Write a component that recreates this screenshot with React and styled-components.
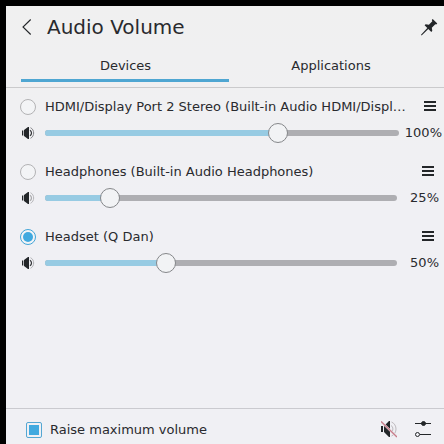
import React from "react";
import styled, { createGlobalStyle } from "styled-components";

const GlobalStyle = createGlobalStyle`
  * { box-sizing: border-box; }
  body { margin: 0; background: #000; overflow: hidden; }
`;

const Screen = styled.div`
  width: 444px;
  height: 444px;
  padding: 6px 0 0 6px;
  background: #000;
  font-family: "DejaVu Sans", sans-serif;
  font-size: 13px;
  color: #292a2e;
`;

const Panel = styled.main`
  display: flex;
  flex-direction: column;
  height: 438px;
  background: linear-gradient(#f0f0f0, #f0f0f4 45%, #f0f0f4);
`;

const Header = styled.header`
  display: flex;
  align-items: center;
  height: 42px;
  padding: 0 6px 0 15px;
`;

const Title = styled.h1`
  flex: 1;
  margin: 0 0 0 14px;
  font-size: 20px;
  line-height: 24px;
  font-weight: 400;
`;

const IconButton = styled.button`
  display: flex;
  flex: none;
  padding: 0;
  border: 0;
  background: none;
  color: #232629;
`;

const Tabs = styled.nav`
  display: flex;
  height: 40px;
  padding: 4px 6px 5px 15px;
  border-bottom: 1px solid #cacacc;
`;

const Tab = styled.button`
  flex: none;
  width: ${(p) => (p.$active ? 208 : 203)}px;
  padding: 0 0 1px 1px;
  border: 0;
  border-bottom: 3px solid ${(p) => (p.$active ? "#4fa6d2" : "transparent")};
  background: none;
  color: inherit;
  font: inherit;
`;

const DeviceList = styled.section`
  flex: 1;
  padding-top: 6px;
`;

const Device = styled.article`
  height: 65px;
  padding-left: 14px;
`;

const Line = styled.div`
  display: flex;
  align-items: center;
  height: 26px;
`;

const Radio = styled.span`
  display: grid;
  place-items: center;
  flex: none;
  width: 16px;
  height: 16px;
  margin-right: 9px;
  border: 1px solid ${(p) => (p.$checked ? "#42a5d8" : "#b3b3b5")};
  border-radius: 50%;
  background: #f3f4f6;

  &::after {
    content: "";
    width: 10px;
    height: 10px;
    border-radius: 50%;
    background: ${(p) => (p.$checked ? "#40a9df" : "transparent")};
  }
`;

const Name = styled.span`
  flex: none;
  width: 361px;
  overflow: hidden;
  white-space: nowrap;
  padding-bottom: 2px;
`;

const MenuButton = styled(IconButton)`
  margin: 0 0 2px ${(p) => (p.$wide ? 18 : 16)}px;
`;

const SpeakerSlot = styled.span`
  display: flex;
  flex: none;
  width: 25px;
`;

const Track = styled.div`
  display: flex;
  align-items: center;
  flex: none;
  width: ${(p) => (p.$wide ? 354 : 352)}px;
  height: 6px;
  border-radius: 3px;
  background: #aeaeb2;
`;

const Fill = styled.div`
  flex: none;
  height: 6px;
  border-radius: 3px 0 0 3px;
  background: #97cbe3;
`;

const Thumb = styled.div`
  flex: none;
  width: 20px;
  height: 20px;
  margin-left: -10px;
  border: 1px solid #85878a;
  border-radius: 50%;
  background: #f2f3f5;
`;

const Percent = styled.span`
  flex: 1;
  padding-bottom: 2px;
  margin-right: ${(p) => (p.$wide ? 2 : 5)}px;
  text-align: right;
  white-space: nowrap;
`;

const Footer = styled.footer`
  display: flex;
  align-items: center;
  height: 36px;
  padding: 6px 13px 0 20px;
  border-top: 1px solid #cacacf;
`;

const CheckBox = styled.span`
  display: grid;
  place-items: center;
  flex: none;
  width: 16px;
  height: 16px;
  margin-right: 8px;
  border: 1px solid #54a7d3;
  border-radius: 2px;

  &::after {
    content: "";
    width: 10px;
    height: 10px;
    background: #40a9df;
  }
`;

const FooterLabel = styled.label`
  flex: 1;
  display: flex;
  align-items: center;
`;

const FooterActions = styled.div`
  display: flex;
  align-items: center;
  gap: 18px;
  padding-bottom: 1px;
`;

const BackIcon = () => (
  <svg width="12" height="16" viewBox="0 0 12 16" fill="none" stroke="currentColor" strokeWidth="1.1">
    <path d="M9.7.5 2 8l7.7 7.5" />
  </svg>
);

const PinIcon = () => (
  <svg width="17" height="17" viewBox="0 0 17 17" fill="currentColor">
    <path d="m11.7 0 4.6 4.6-1.1 1-.9-.3-3.5 3.5.5 3-1 1.2-3-3L.6 16.4 0 15.8 6.3 9 3.6 6.2l1-.9 3.3.4 3.4-3.5-.5-1.2z" />
  </svg>
);

const MenuIcon = () => (
  <svg width="12" height="10" viewBox="0 0 12 10" fill="currentColor">
    <path d="M0 0h12v2H0zM0 4h12v2H0zM0 8h12v2H0z" />
  </svg>
);

const waveColors = { low: ["#a9a9ac", "#b7b7ba"], medium: ["#333538", "#b3b3b6"], high: ["#333538", "#858589"] };

const SpeakerIcon = ({ level }) => (
  <svg width="16" height="16" viewBox="0 0 16 16" fill="none">
    <path d="M2 5.5h1.3v5H2zM4 5l4-3h1v12H8l-4-3z" fill="#232629" />
    <path d="M10 5.2c2 1.3 2 4.3 0 5.6" stroke={waveColors[level][0]} strokeWidth="1.2" />
    <path d="M10.5 2.7c4.2 2 4.2 8.6 0 10.6" stroke={waveColors[level][1]} />
  </svg>
);

const MutedIcon = () => (
  <svg width="16" height="18" viewBox="0 0 16 18" fill="none">
    <path d="M0 6h2v6H0zM3 6l5-5h1v16H8l-5-5z" fill="#232629" />
    <path d="M10 5.4c2.5 1.7 2.5 5.5 0 7.2M10.5 2c6 2.5 6 11.5 0 14" stroke="#bdb9bd" />
    <path d="m0 1.5 16 15.5" stroke="#e6d9de" strokeWidth="2.3" />
    <path d="m0 1.5 16 15.5" stroke="#c77886" strokeWidth="1.1" />
  </svg>
);

const SettingsIcon = () => (
  <svg width="16" height="16" viewBox="0 0 16 16" fill="none" stroke="#232629">
    <path d="M0 2.5h16M5 13.5h11" />
    <circle cx="8.5" cy="2.5" r="2" fill="#232629" />
    <circle cx="2.5" cy="13.5" r="2" />
  </svg>
);

const devices = [
  { name: "HDMI/Display Port 2 Stereo (Built-in Audio HDMI/Displ…", label: "100%", position: 233, level: "high", wide: true },
  { name: "Headphones (Built-in Audio Headphones)", label: "25%", position: 65, level: "low" },
  { name: "Headset (Q Dan)", label: "50%", position: 121, level: "medium", checked: true },
];

export default function App() {
  return (
    <Screen>
      <GlobalStyle />
      <Panel>
        <Header>
          <IconButton aria-label="Back"><BackIcon /></IconButton>
          <Title>Audio Volume</Title>
          <IconButton aria-label="Keep open"><PinIcon /></IconButton>
        </Header>
        <Tabs>
          <Tab $active>Devices</Tab>
          <Tab>Applications</Tab>
        </Tabs>
        <DeviceList>
          {devices.map((d) => (
            <Device key={d.name}>
              <Line>
                <Radio $checked={d.checked} />
                <Name>{d.name}</Name>
                <MenuButton $wide={d.wide} aria-label="Device menu"><MenuIcon /></MenuButton>
              </Line>
              <Line>
                <SpeakerSlot><SpeakerIcon level={d.level} /></SpeakerSlot>
                <Track $wide={d.wide}>
                  <Fill style={{ width: d.position }} />
                  <Thumb />
                </Track>
                <Percent $wide={d.wide}>{d.label}</Percent>
              </Line>
            </Device>
          ))}
        </DeviceList>
        <Footer>
          <FooterLabel><CheckBox />Raise maximum volume</FooterLabel>
          <FooterActions>
            <IconButton aria-label="Mute"><MutedIcon /></IconButton>
            <IconButton aria-label="Configure"><SettingsIcon /></IconButton>
          </FooterActions>
        </Footer>
      </Panel>
    </Screen>
  );
}
